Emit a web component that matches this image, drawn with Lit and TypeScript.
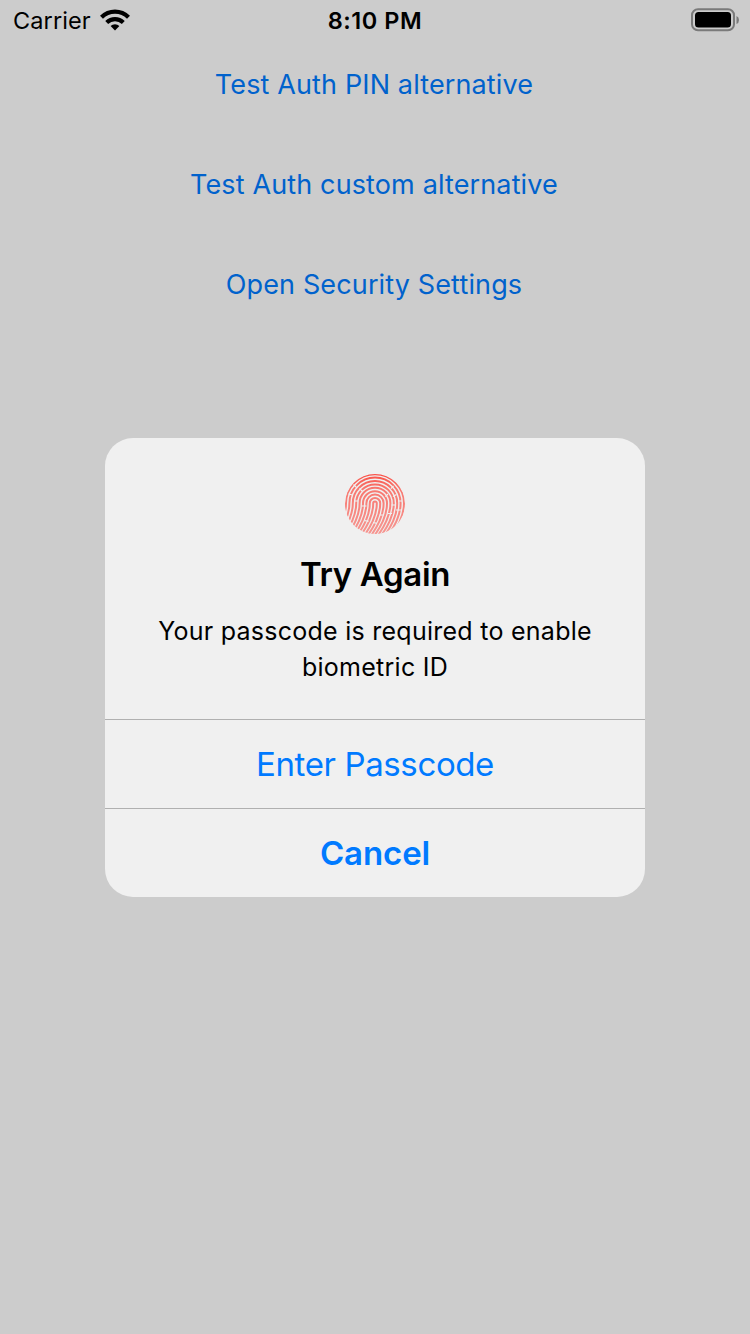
import { LitElement, html, css, svg } from "lit";
import { customElement } from "lit/decorators.js";

// Ridges around the core of the print: an arch on top, legs sweeping down to the left.
const ridge = (r: number) => {
  const cx = 30, cy = 29.2;
  const l = cx - r, e = cx + r;
  return `M${l - 13} ${cy + 33}C${l - 5} ${cy + 22} ${l} ${cy + 12} ${l} ${cy}A${r} ${r} 0 0 1 ${e} ${cy}C${e} ${cy + 12} ${e - 5} ${cy + 22} ${e - 13} ${cy + 33}`;
};
const radii = [1.8, 5.2, 8.6, 12, 15.4, 18.8, 22.2, 25.6, 29];

// Short breaks that split the ridges into separate strands.
const breaks = "M8.5 10.5l3 3M14.5 14.5l3 3M3.5 20l4 1M9.5 27h3.5M16.5 32h5M19.5 46.5l4 .8M28 48.5l4 .8M46.5 31h4M51 36h5M43 39.5h4M34.5 41h3.5M48.5 12l-2.6 2.6M51.5 20.5l-3.5 2M43 20l-2.6 2.6M57 27h-4";

@customElement("app-root")
export class AppRoot extends LitElement {
  static styles = css`
    :host { display: block; height: 1334px; background: #ccc; font-family: Inter, "Liberation Sans", sans-serif; color: #000; overflow: hidden; }
    * { box-sizing: border-box; }
    .status { display: grid; grid-template-columns: 1fr auto 1fr; align-items: center; height: 40px; padding: 0 11px 0 13px; font-size: 23.5px; }
    .left { display: flex; align-items: center; gap: 9px; }
    .carrier { letter-spacing: 0.1px; }
    .time { font-weight: 600; letter-spacing: 0.55px; margin-right: 2px; }
    .battery { justify-self: end; }
    svg { display: block; }
    .links { display: flex; flex-direction: column; align-items: center; gap: 40px; padding: 15px 2px 0 0; height: 398px; }
    button { border: 0; background: none; padding: 0; font: inherit; color: inherit; }
    .link { height: 60px; color: #0062cc; font-size: 27px; line-height: 60px; letter-spacing: 0.13px; }
    .alert { width: 540px; height: 459px; margin: 0 auto; border-radius: 28px; background: #f0f0f0; overflow: hidden; display: flex; flex-direction: column; }
    .content { height: 281px; display: flex; flex-direction: column; align-items: center; padding-top: 36px; }
    .title { margin: 20px 0 0; font-size: 33px; line-height: 40px; font-weight: 600; letter-spacing: -0.35px; }
    .message { margin: 19px 0 0; width: 460px; font-size: 25px; line-height: 36px; text-align: center; letter-spacing: 0.26px; }
    .action { border-top: 1px solid #b0b0b0; height: 89px; color: #007aff; font-size: 33px; line-height: 88px; letter-spacing: -0.38px; }
    .bold { font-weight: 600; letter-spacing: -0.1px; }
  `;

  render() {
    return html`
      <header class="status">
        <div class="left">
          <span class="carrier">Carrier</span>
          <svg width="30" height="22" viewBox="0 0 30 22">
            <g fill="none" stroke="#000" stroke-width="4.2">
              <path d="M1.5 8.2A19.3 19.3 0 0 1 28.5 8.2" />
              <path d="M6.7 13.5A12 12 0 0 1 23.3 13.5" />
            </g>
            <path d="M15 21.5L10.6 17A6.4 6.4 0 0 1 19.4 17Z" />
          </svg>
        </div>
        <span class="time">8:10 PM</span>
        <svg class="battery" width="48" height="24" viewBox="0 0 48 24">
          <rect x="1" y="1.2" width="42" height="21" rx="6" fill="none" stroke="#7a7a7a" stroke-width="2" />
          <rect x="4" y="4" width="36" height="15.5" rx="3.5" />
          <path d="M45.5 8Q48 9 48 12T45.5 16Z" fill="#7a7a7a" />
        </svg>
      </header>
      <nav class="links">
        <button class="link">Test Auth PIN alternative</button>
        <button class="link">Test Auth custom alternative</button>
        <button class="link">Open Security Settings</button>
      </nav>
      <section class="alert" role="alertdialog">
        <div class="content">
          <svg width="60" height="60" viewBox="0 0 60 60">
            <defs>
              <clipPath id="disc"><circle cx="30" cy="30" r="30" /></clipPath>
              <linearGradient id="ink" gradientUnits="userSpaceOnUse" x1="30" y1="0" x2="30" y2="60">
                <stop offset="0" stop-color="#fa5046" />
                <stop offset="0.25" stop-color="#f87870" />
                <stop offset="1" stop-color="#f69691" />
              </linearGradient>
            </defs>
            <g clip-path="url(#disc)" fill="none">
              <g stroke="url(#ink)" stroke-width="2">${radii.map((r) => svg`<path d=${ridge(r)} />`)}</g>
              <path d=${breaks} stroke="#f0f0f0" stroke-width="1.2" />
            </g>
          </svg>
          <h1 class="title">Try Again</h1>
          <p class="message">Your passcode is required to enable biometric ID</p>
        </div>
        <button class="action">Enter Passcode</button>
        <button class="action bold">Cancel</button>
      </section>
    `;
  }
}
